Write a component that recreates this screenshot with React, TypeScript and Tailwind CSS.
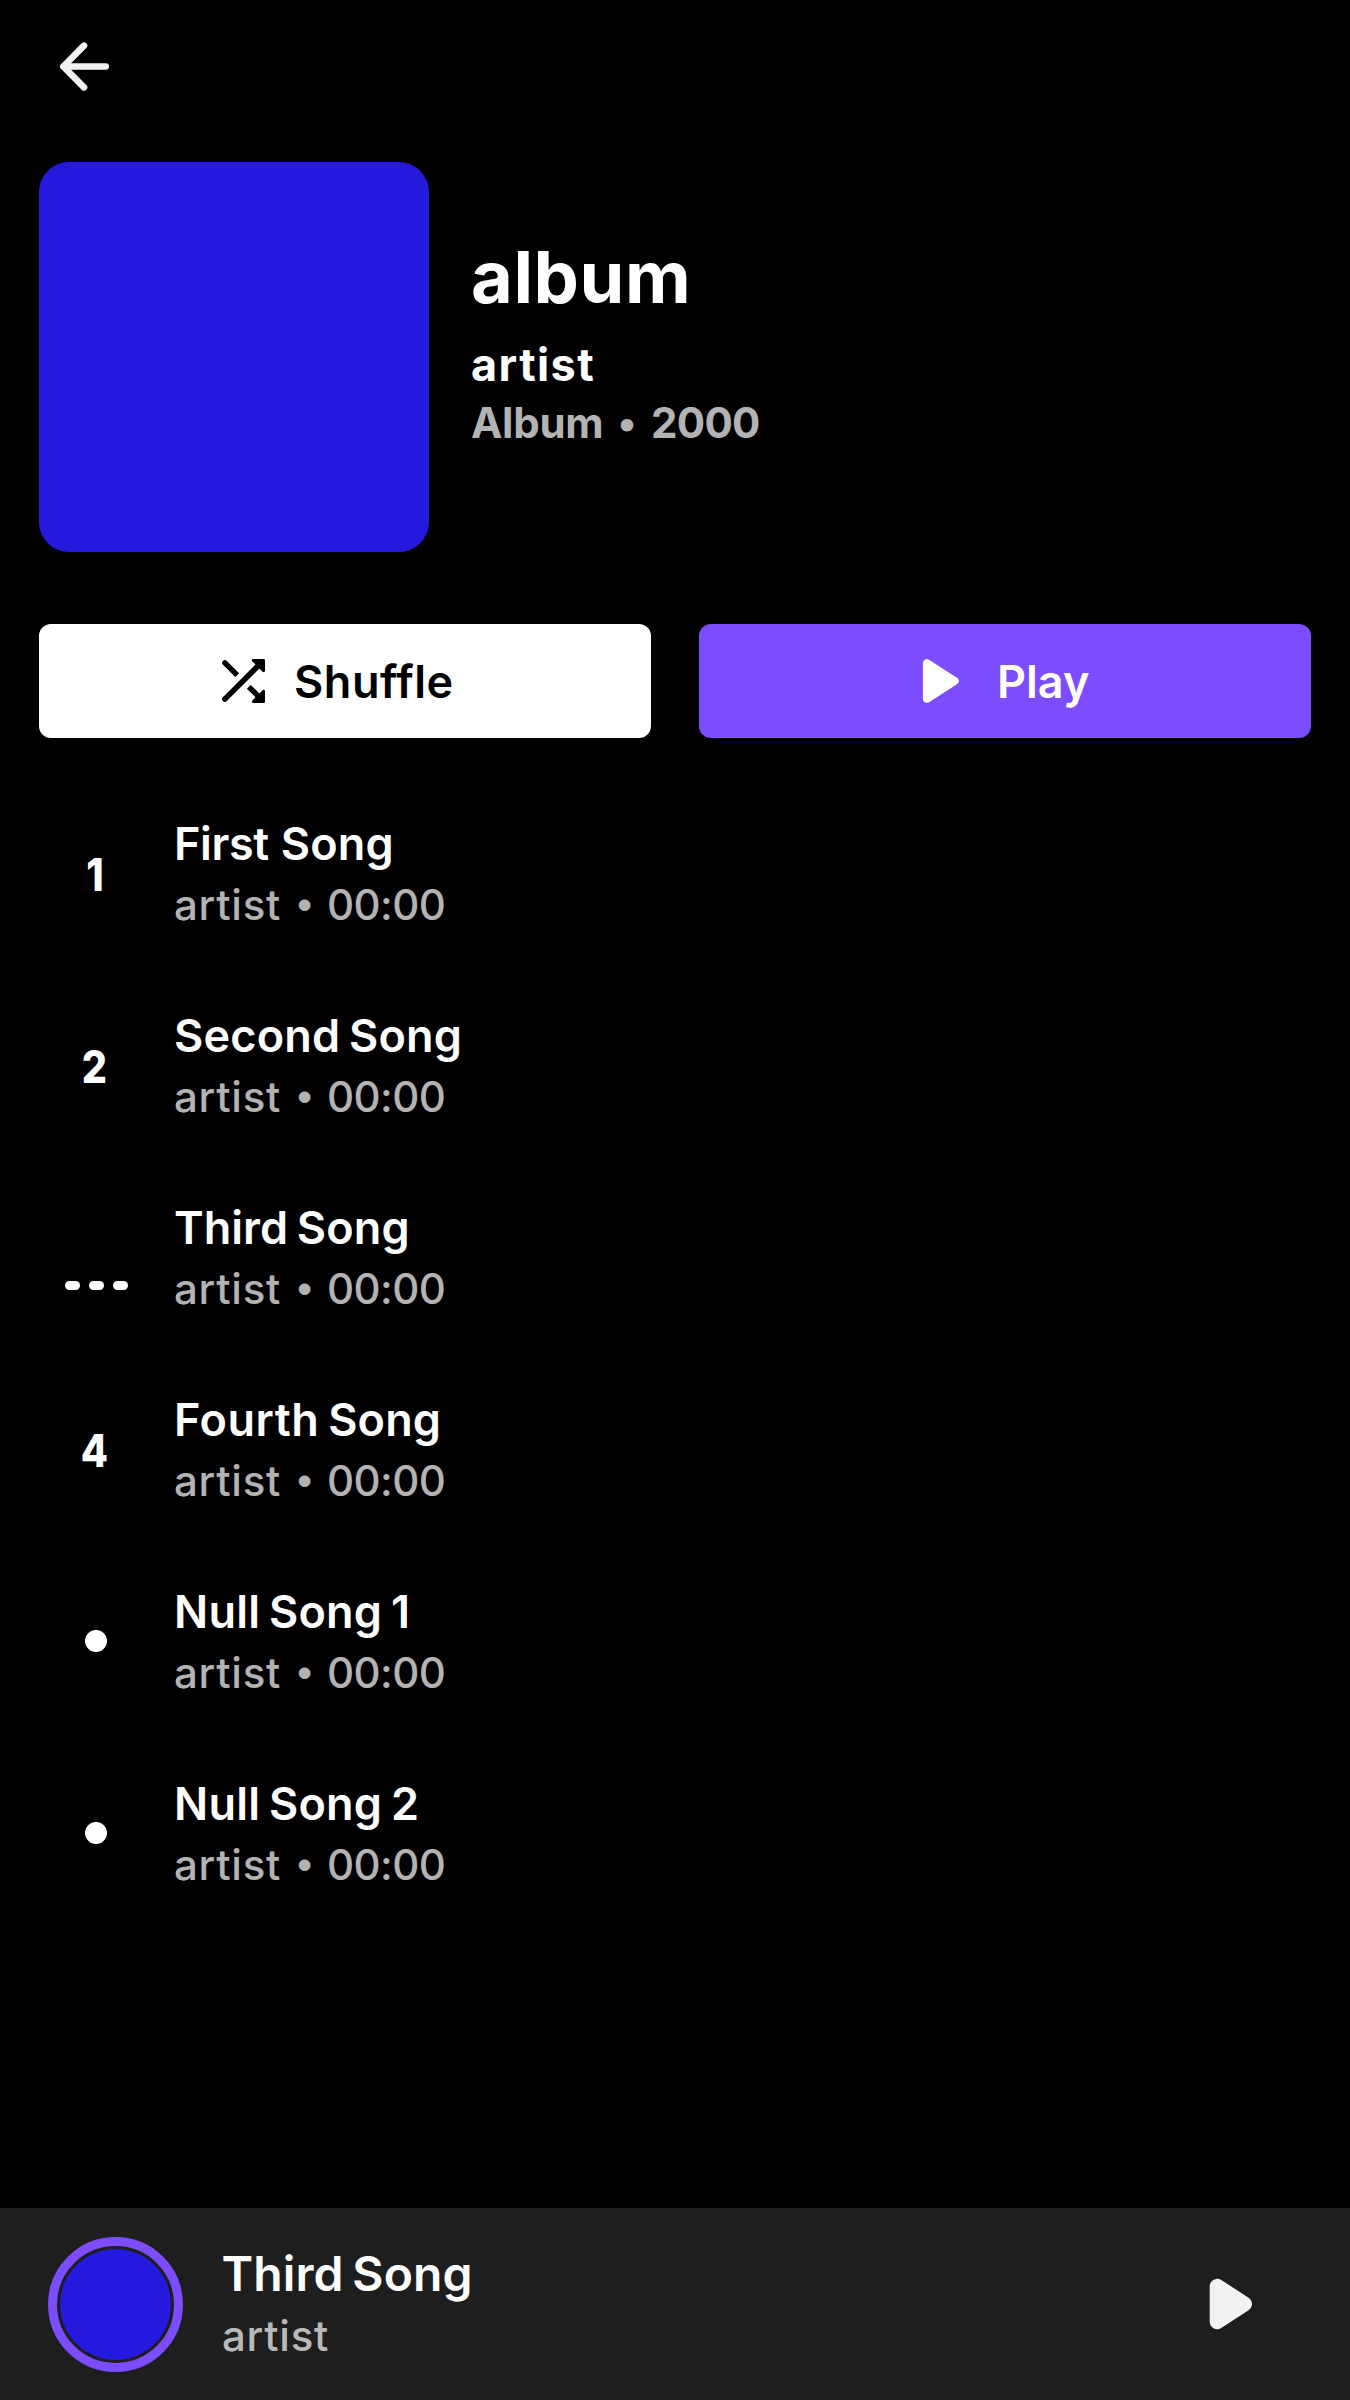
type Word = { text: string; tracking: string };

type Song = { words: Word[]; spacing: string; marker: string };

const SONG: Word = { text: 'Song', tracking: 'tracking-[0.17px]' };

const SONGS: Song[] = [
  { words: [{ text: 'First', tracking: 'tracking-[-0.38px]' }, SONG], spacing: '[word-spacing:0.6px]', marker: '1' },
  { words: [{ text: 'Second', tracking: 'tracking-[0.2px]' }, SONG], spacing: '[word-spacing:-2.6px]', marker: '2' },
  { words: [{ text: 'Third', tracking: 'tracking-[0.02px]' }, SONG], spacing: '[word-spacing:-2.6px]', marker: 'playing' },
  { words: [{ text: 'Fourth', tracking: 'tracking-[0.54px]' }, SONG], spacing: '[word-spacing:-2.6px]', marker: '4' },
  {
    words: [{ text: 'Null', tracking: 'tracking-[0.27px]' }, SONG, { text: '1', tracking: 'tracking-normal' }],
    spacing: '[word-spacing:-2.6px]',
    marker: '',
  },
  {
    words: [{ text: 'Null', tracking: 'tracking-[0.27px]' }, SONG, { text: '2', tracking: 'tracking-normal' }],
    spacing: '[word-spacing:-2.6px]',
    marker: '',
  },
];

function Words({ words }: { words: Word[] }) {
  return (
    <>
      {words.map((w, i) => (
        <span key={i}>
          {i > 0 && ' '}
          <span className={w.tracking}>{w.text}</span>
        </span>
      ))}
    </>
  );
}

function BackIcon() {
  return (
    <svg
      className="size-[72px]"
      viewBox="0 0 72 72"
      fill="none"
      stroke="#f1f2f4"
      strokeWidth="6.6"
      strokeLinecap="round"
      strokeLinejoin="round"
    >
      <path d="M57.7 36.5H16M36 15.7L15.3 36.5L36 57.3" />
    </svg>
  );
}

function ShuffleIcon() {
  return (
    <svg className="size-[66px] shrink-0" viewBox="0 0 24 24" fill="currentColor">
      <path d="M10.59 9.17L6.12 4.7a.996.996 0 1 0-1.41 1.41l4.46 4.46 1.42-1.4zm4.76-4.32l1.19 1.19L4.7 17.88a.996.996 0 1 0 1.41 1.41L17.96 7.46l1.19 1.19c.31.31.85.09.85-.36V4.5c0-.28-.22-.5-.5-.5h-3.79c-.45 0-.67.54-.36.85zm-.52 8.56l-1.41 1.41 3.13 3.13-1.2 1.2c-.31.31-.09.85.36.85h3.79c.28 0 .5-.22.5-.5v-3.79c0-.45-.54-.67-.85-.35l-1.19 1.19-3.13-3.14z" />
    </svg>
  );
}

function PlayIcon() {
  return (
    <svg
      className="size-[66px] shrink-0"
      viewBox="0 0 66 66"
      fill="currentColor"
      stroke="currentColor"
      strokeWidth="8"
      strokeLinejoin="round"
    >
      <path d="M13.9 15.2V50.8L41.8 33Z" />
    </svg>
  );
}

function Marker({ kind }: { kind: string }) {
  if (kind === 'playing') {
    return (
      <span className="flex h-16 items-end gap-[9px]">
        <span className="h-[9px] w-[15px] rounded-full bg-white" />
        <span className="h-[9px] w-[15px] rounded-full bg-white" />
        <span className="h-[9px] w-[15px] rounded-full bg-white" />
      </span>
    );
  }
  if (kind === '') return <span className="mb-[2px] size-[22px] rounded-full bg-white" />;
  return <span className="mt-[2px] mr-[3px] scale-x-[0.88] text-[45px] leading-[54px] font-extrabold">{kind}</span>;
}

export default function App() {
  return (
    <div className="flex h-[2400px] w-[1350px] flex-col bg-black font-['Inter',sans-serif] text-white">
      <header className="flex h-[162px] items-start pt-[30px] pl-12">
        <button aria-label="Back">
          <BackIcon />
        </button>
      </header>

      <section className="flex h-[390px] px-[39px]">
        <div className="size-[390px] shrink-0 rounded-[30px] bg-[#2419dd]" />
        <div className="flex flex-col pt-[72px] pl-[42px]">
          <h1 className="text-[72px] leading-[86px] font-bold tracking-[0.62px]">album</h1>
          <p className="mt-[18px] text-[45px] leading-[54px] font-bold tracking-[1.4px]">artist</p>
          <p className="mt-[5px] flex text-[42px] leading-[52px] font-bold text-[#b3b3b3]">
            <span className="w-[132px] tracking-[-0.27px]">Album</span>
            <span className="w-[48px] text-center text-[40px]">•</span>
            <span className="tracking-[-0.7px]">2000</span>
          </p>
        </div>
      </section>

      <div className="mt-[72px] grid grid-cols-2 gap-12 px-[39px] text-[45px] leading-[54px] font-semibold">
        <button className="flex h-[114px] items-center gap-[18px] rounded-xl bg-white pl-[171px] text-black">
          <ShuffleIcon />
          <span className="pt-[2px] tracking-[0.55px]">Shuffle</span>
        </button>
        <button className="flex h-[114px] items-center gap-[18px] rounded-xl bg-[#7c4dff] pl-[214px]">
          <PlayIcon />
          <span className="pt-[2px]">Play</span>
        </button>
      </div>

      <ul className="mt-10 flex flex-1 flex-col px-[39px]">
        {SONGS.map((s, i) => (
          <li key={i} className="flex h-48 items-center">
            <div className="flex w-[114px] shrink-0 justify-center">
              <Marker kind={s.marker} />
            </div>
            <div className="flex flex-col gap-2 pl-[21px]">
              <p className={`text-[45px] leading-[54px] font-semibold whitespace-nowrap ${s.spacing}`}>
                <Words words={s.words} />
              </p>
              <p className="flex text-[42px] leading-[52px] font-medium text-[#b3b3b3]">
                <span className="w-[107px] tracking-[0.74px]">artist</span>
                <span className="mt-[-2px] w-[46px] pl-[1px] text-center text-[37px]">•</span>
                <span className="tracking-[-0.57px]">00:00</span>
              </p>
            </div>
          </li>
        ))}
      </ul>

      <footer className="flex h-48 shrink-0 items-center bg-[#1e1e1e] pr-[90px] pl-12">
        <div className="size-[135px] shrink-0 rounded-full border-[9px] border-[#7c4dff] p-[3px]">
          <div className="size-full rounded-full bg-[#2419dd]" />
        </div>
        <div className="flex flex-1 flex-col gap-[7px] pb-[2px] pl-[38.5px]">
          <p className="text-[48px] leading-[58px] font-semibold [word-spacing:-3.4px]">
            <Words words={[{ text: 'Third', tracking: 'tracking-[0.09px]' }, SONG]} />
          </p>
          <p className="pl-[0.5px] text-[42px] leading-[52px] font-medium tracking-[0.74px] text-[#b9b9b9]">artist</p>
        </div>
        <button aria-label="Play" className="text-[#f1f2f4]">
          <svg
            className="h-[66px] w-[60px]"
            viewBox="0 0 60 66"
            fill="currentColor"
            stroke="currentColor"
            strokeWidth="15"
            strokeLinejoin="round"
          >
            <path d="M17.2 15.3V50.7L44.5 33Z" />
          </svg>
        </button>
      </footer>
    </div>
  );
}
